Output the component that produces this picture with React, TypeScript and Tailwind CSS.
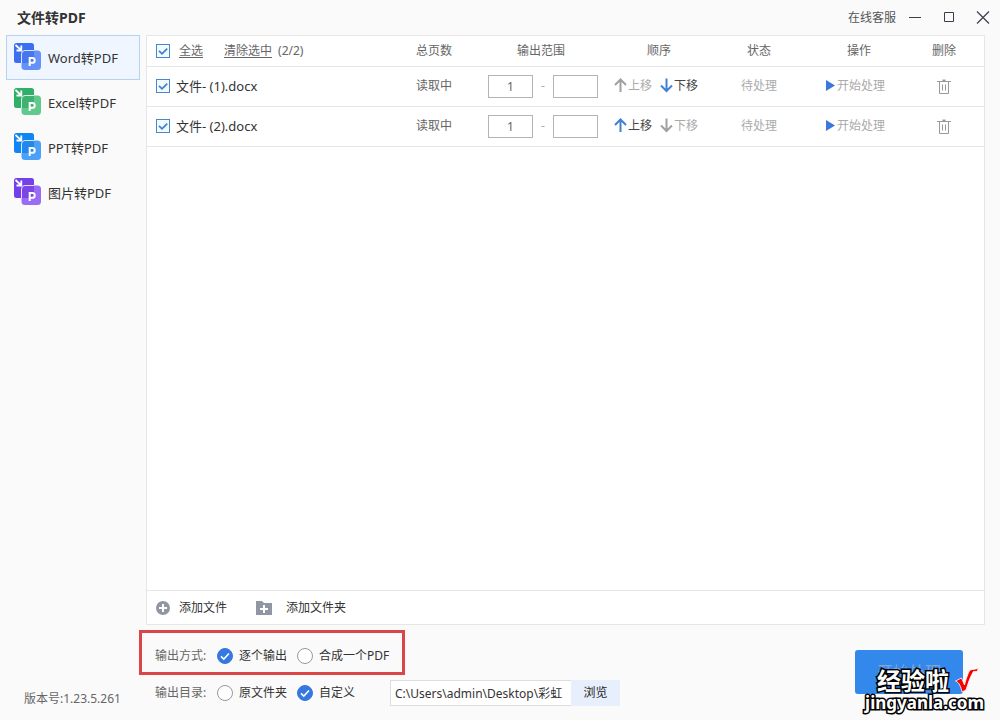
import { useState } from "react";

const tools = [
  { label: "Word转PDF", back: "#3b6ff0", front: "#6692f8", overlap: "#4677ee" },
  { label: "Excel转PDF", back: "#2fb066", front: "#62c98c", overlap: "#3fb272" },
  { label: "PPT转PDF", back: "#0f86f2", front: "#4ba0f8", overlap: "#2487ee" },
  { label: "图片转PDF", back: "#7440ea", front: "#9a6cf6", overlap: "#7c45e6" },
];

const initialFiles = ["文件- (1).docx", "文件- (2).docx"];

function ToolIcon({ back, front, overlap }: { back: string; front: string; overlap: string }) {
  return (
    <svg width="28" height="30" viewBox="0 0 28 30" aria-hidden="true">
      <rect x="0" y="0" width="20" height="20" rx="2.500" fill={back} />
      <rect x="7.500" y="7.500" width="19.500" height="19.500" rx="3.500" fill={front} />
      <path d="M11 7.500H20V17.500a2.500 2.500 0 0 1-2.500 2.500H7.500v-9a3.500 3.500 0 0 1 3.500-3.500z" fill={overlap} />
      <path d="M7.500 20v-9a3.500 3.500 0 0 1 3.500-3.500h9" fill="none" stroke="#fff" strokeOpacity="0.800" strokeWidth="1" />
      <path d="M1.500 2l5 4.600M7.300 2.500v5H2.500" fill="none" stroke="#fff" strokeWidth="1.800" />
      <path d="M15.700 23v-8h2.600a2.400 2.400 0 0 1 0 4.800h-2.600" fill="none" stroke="#fff" strokeWidth="2" />
    </svg>
  );
}

function Check({ checked, onChange, label, id }: { checked: boolean; onChange: () => void; label: string; id: string }) {
  return (
    <span className="relative grid size-[14px] shrink-0">
      <input
        id={id}
        type="checkbox"
        aria-label={label}
        checked={checked}
        onChange={onChange}
        className="peer size-[14px] appearance-none border border-[#4a86cf] bg-[#f2fbff]"
      />
      <svg viewBox="0 0 14 14" className="pointer-events-none absolute inset-0 hidden peer-checked:block" aria-hidden="true">
        <path d="M3 6.800l3 3 5.200-5.200" fill="none" stroke="#4480d0" strokeWidth="1.800" />
      </svg>
    </span>
  );
}

function Radio({ name, label, checked, onChange }: { name: string; label: string; checked: boolean; onChange: () => void }) {
  return (
    <label className="flex items-center gap-[6px] text-[#333]">
      <span className="relative grid size-4">
        <input
          type="radio"
          name={name}
          checked={checked}
          onChange={onChange}
          className="peer size-4 appearance-none rounded-full border border-[#999] bg-white checked:border-[#3678e0] checked:bg-[#3678e0]"
        />
        <svg viewBox="0 0 16 16" className="pointer-events-none absolute inset-0 hidden peer-checked:block" aria-hidden="true">
          <path d="M4 8.300l2.800 2.700 5.200-5.500" fill="none" stroke="#fff" strokeWidth="1.600" />
        </svg>
      </span>
      {label}
    </label>
  );
}

function MoveButton({ up, disabled, onClick }: { up?: boolean; disabled: boolean; onClick: () => void }) {
  return (
    <button
      disabled={disabled}
      onClick={onClick}
      className="flex items-center gap-px text-[#444] disabled:text-[#aaa]"
    >
      <svg
        width="13"
        height="16"
        viewBox="0 0 13 16"
        fill="none"
        stroke={disabled ? "#a0a0a0" : "#3f80d8"}
        strokeWidth="2"
        aria-hidden="true"
      >
        {up ? <path d="M6.500 14V2M1 7l5.500-5.500L12 7" /> : <path d="M6.500 0.500v12M1 7.500l5.500 5.500L12 7.500" />}
      </svg>
      {up ? "上移" : "下移"}
    </button>
  );
}

function TrashIcon() {
  return (
    <svg width="14" height="18" viewBox="0 0 14 18" fill="none" stroke="#999" aria-hidden="true">
      <path d="M0 4.500h14M2.500 4.500v12h9v-12M5.500 7.500v6M8.500 7.500v6" />
      <path d="M5.500 3.500h3" strokeWidth="2" />
    </svg>
  );
}

function TitleBar() {
  return (
    <header className="flex h-[35px] items-center justify-between pl-[17px] pr-[10px]">
      <h1 className="text-sm font-bold text-[#333]">文件转PDF</h1>
      <div className="flex items-center text-[#555]">
        <a href="#service" className="mr-[12px]">在线客服</a>
        <button aria-label="最小化" className="mr-[20px]">
          <svg width="14" height="14" viewBox="0 0 14 14" stroke="#3c3f4a"><path d="M1 6.500h12" /></svg>
        </button>
        <button aria-label="最大化" className="mr-[20px]">
          <svg width="14" height="14" viewBox="0 0 14 14" fill="none" stroke="#3c3f4a"><path d="M2.500 1.500h9v9h-9z" /></svg>
        </button>
        <button aria-label="关闭">
          <svg width="14" height="14" viewBox="0 0 14 14" stroke="#3c3f4a" strokeWidth="1.200"><path d="M1 0.500l12 12M13 0.500L1 12.500" /></svg>
        </button>
      </div>
    </header>
  );
}

function Watermark() {
  return (
    <div className="pointer-events-none absolute right-[16px] bottom-[8px] flex flex-col items-end font-bold text-white">
      <div className="flex items-center gap-[6px] pr-[5px] text-[24px] leading-[24px]">
        <span className="[-webkit-text-stroke:3px_#000] [paint-order:stroke]">经验啦</span>
        <svg width="24" height="26" viewBox="0 0 24 26" aria-hidden="true">
          <path d="M0.500 13l6-3 3 7C11 11 13 5 15 2l8.500-1.500-1.500 3h-3.500C15 9 13 16 11 22l-4 2C6 19 4 14 0.500 13z" fill="#f80000" stroke="#fff" strokeWidth="0.800" />
        </svg>
      </div>
      <span className="text-[17px] leading-[18px] [-webkit-text-stroke:3px_#000] [paint-order:stroke]">jingyanla.com</span>
    </div>
  );
}

export default function App() {
  const [tool, setTool] = useState(0);
  const [files, setFiles] = useState(initialFiles);
  const [selected, setSelected] = useState(initialFiles);
  const [mode, setMode] = useState("逐个输出");
  const [folder, setFolder] = useState("自定义");

  const toggle = (f: string) => setSelected(selected.includes(f) ? selected.filter((s) => s !== f) : [...selected, f]);
  const toggleAll = () => setSelected(selected.length === files.length ? [] : files);
  const move = (i: number, by: number) => {
    const next = [...files];
    [next[i], next[i + by]] = [next[i + by], next[i]];
    setFiles(next);
  };

  return (
    <div className="relative flex min-h-screen flex-col bg-[#fafafa] font-['Noto_Sans','Noto_Sans_CJK_SC',sans-serif] text-[12px] leading-[18px] text-[#666]">
      <TitleBar />

      <div className="flex flex-1">
        <aside className="flex w-[146px] shrink-0 flex-col justify-between pb-[12px]">
          <nav className="flex flex-col pl-[6px] pr-[6px]">
            {tools.map((t, i) => (
              <button
                key={t.label}
                onClick={() => setTool(i)}
                className={
                  i === tool
                    ? "flex h-[45px] items-center gap-[6px] border border-[#b5d2f3] bg-[#eff6ff] px-[7px] text-[13px] text-[#333]"
                    : "flex h-[45px] items-center gap-[6px] border border-transparent px-[7px] text-[13px] text-[#333]"
                }
              >
                <ToolIcon back={t.back} front={t.front} overlap={t.overlap} />
                {t.label}
              </button>
            ))}
          </nav>
          <p className="pl-[24px]">版本号:1.23.5.261</p>
        </aside>

        <main className="flex min-w-0 flex-1 flex-col pr-[15px]">
          <section className="flex flex-1 flex-col border border-[#e6e6e6] bg-white">
            <table className="w-full table-fixed border-collapse text-center">
              <colgroup>
                <col />
                <col className="w-[68px]" />
                <col className="w-[146px]" />
                <col className="w-[90px]" />
                <col className="w-[110px]" />
                <col className="w-[90px]" />
                <col className="w-[80px]" />
              </colgroup>
              <thead>
                <tr className="h-[30px] border-b border-[#e6e6e6]">
                  <th className="pl-[9px] font-normal">
                    <div className="flex items-center">
                      <Check id="all" label="全选" checked={selected.length === files.length} onChange={toggleAll} />
                      <label htmlFor="all" className="ml-[9px] underline underline-offset-2">全选</label>
                      <button className="ml-[21px] underline underline-offset-2" onClick={() => setSelected([])}>清除选中</button>
                      <span className="ml-[6px]">({selected.length}/{files.length})</span>
                    </div>
                  </th>
                  <th className="font-normal">总页数</th>
                  <th className="font-normal">输出范围</th>
                  <th className="font-normal">顺序</th>
                  <th className="font-normal">状态</th>
                  <th className="font-normal">操作</th>
                  <th className="font-normal">删除</th>
                </tr>
              </thead>
              <tbody>
                {files.map((f, i) => (
                  <tr key={f} className="h-[40px] border-b border-[#e6e6e6]">
                    <td className="pl-[9px]">
                      <div className="flex items-center gap-[6px] text-[13px] text-[#333]">
                        <Check id={f} label={f} checked={selected.includes(f)} onChange={() => toggle(f)} />
                        <label htmlFor={f}>{f}</label>
                      </div>
                    </td>
                    <td>读取中</td>
                    <td>
                      <div className="flex items-center justify-center pl-[4px] text-[#aaa]">
                        <input aria-label="起始页" defaultValue="1" className="h-[23px] w-[45px] border border-[#b4b4b4] text-center text-[#666]" />
                        <span className="w-[20px]">-</span>
                        <input aria-label="结束页" className="h-[23px] w-[45px] border border-[#b4b4b4] text-center text-[#666]" />
                      </div>
                    </td>
                    <td>
                      <div className="flex gap-[8px]">
                        <MoveButton up disabled={i === 0} onClick={() => move(i, -1)} />
                        <MoveButton disabled={i === files.length - 1} onClick={() => move(i, 1)} />
                      </div>
                    </td>
                    <td className="text-[#aaa]">待处理</td>
                    <td>
                      <button className="flex items-center gap-[2px] pl-[12px] text-[#aaa]">
                        <svg width="9" height="12" viewBox="0 0 9 12" aria-hidden="true"><path d="M0 0l9 5.500-9 5.500z" fill="#3b78dc" /></svg>
                        开始处理
                      </button>
                    </td>
                    <td>
                      <button aria-label="删除" className="align-middle" onClick={() => setFiles(files.filter((x) => x !== f))}>
                        <TrashIcon />
                      </button>
                    </td>
                  </tr>
                ))}
              </tbody>
            </table>

            <div className="mt-auto flex h-[34px] items-center border-t border-[#e6e6e6] pl-[9px] text-[#333]">
              <button className="flex items-center gap-[9px]">
                <svg width="14" height="14" viewBox="0 0 14 14" aria-hidden="true">
                  <circle cx="7" cy="7" r="7" fill="#9097a3" />
                  <path d="M7 3v8M3 7h8" stroke="#fff" strokeWidth="2" />
                </svg>
                添加文件
              </button>
              <button className="ml-[29px] flex items-center gap-[14px]">
                <svg width="16" height="14" viewBox="0 0 16 14" aria-hidden="true">
                  <path d="M0 0h6l2 2h8v12H0z" fill="#9097a3" />
                  <path d="M8 4v8M4 8h8" stroke="#fff" strokeWidth="2" />
                </svg>
                添加文件夹
              </button>
            </div>
          </section>

          <footer className="flex justify-between pb-[14px] pt-[5px]">
            <div className="-ml-[7px] flex flex-col items-start gap-[5px]">
              <div role="radiogroup" aria-label="输出方式" className="flex h-[45px] w-[266px] items-center border-3 border-[#dc4545] pl-[13px] pt-[6px]">
                <span className="w-[62px]">输出方式:</span>
                <Radio name="mode" label="逐个输出" checked={mode === "逐个输出"} onChange={() => setMode("逐个输出")} />
                <span className="w-[10px]" />
                <Radio name="mode" label="合成一个PDF" checked={mode === "合成一个PDF"} onChange={() => setMode("合成一个PDF")} />
              </div>
              <div className="flex h-[26px] items-center pl-[16px]">
                <span className="w-[62px]">输出目录:</span>
                <Radio name="folder" label="原文件夹" checked={folder === "原文件夹"} onChange={() => setFolder("原文件夹")} />
                <span className="w-[10px]" />
                <Radio name="folder" label="自定义" checked={folder === "自定义"} onChange={() => setFolder("自定义")} />
                <input
                  aria-label="输出目录"
                  defaultValue="C:\Users\admin\Desktop\彩虹"
                  className="ml-[35px] h-[26px] w-[181px] border border-r-0 border-[#ddd] bg-white pl-[4px] text-[#333]"
                />
                <button className="h-[26px] w-[49px] bg-[#e8effc] text-[#222]">浏览</button>
              </div>
            </div>
            <button className="mr-[22px] mt-[20px] h-[44px] w-[108px] rounded-[3px] bg-[#3388eb] text-[16px] text-[#7fa6d6]">开始处理</button>
          </footer>
        </main>
      </div>

      <Watermark />
    </div>
  );
}
